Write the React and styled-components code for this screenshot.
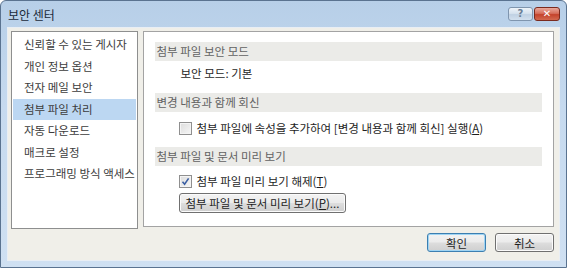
import React from "react";
import styled, { createGlobalStyle } from "styled-components";

const GlobalStyle = createGlobalStyle`
  html, body {
    margin: 0;
    padding: 0;
    background: #ffffff;
  }
  body {
    font-family: "Noto Sans CJK KR", "Noto Sans", sans-serif;
    font-size: 11.5px;
  }
`;

const Window = styled.div`
  width: 567px;
  height: 268px;
  box-sizing: border-box;
  border: 1px solid #5a7390;
  border-radius: 6px 6px 0 0;
  background: linear-gradient(180deg, #b7cfe8 0%, #c6daef 40%, #cfe0f2 100%);
  display: flex;
  flex-direction: column;
  overflow: hidden;
`;

const TitleBar = styled.div`
  height: 26px;
  display: flex;
  align-items: center;
  justify-content: space-between;
  padding: 0 6px 0 7px;
`;

const Title = styled.span`
  color: #1b2a3a;
  font-size: 12px;
  line-height: 14px;
  margin-top: 1px;
`;

const Caption = styled.div`
  display: flex;
  gap: 1px;
  align-self: flex-start;
  margin-top: 6px;
`;

const CaptionButton = styled.div`
  width: ${({ $wide }) => ($wide ? 26 : 25)}px;
  height: 14px;
  box-sizing: border-box;
  border: 1px solid ${({ $close }) => ($close ? "#7a2a1e" : "#7f95ae")};
  border-radius: 3px;
  background: ${({ $close }) =>
    $close
      ? "linear-gradient(180deg, #e9a99c 0%, #d66e5b 45%, #c4432c 55%, #d3694f 100%)"
      : "linear-gradient(180deg, #edf3f9 0%, #d6e2ee 45%, #c0d1e3 55%, #d2e0ee 100%)"};
  display: flex;
  align-items: center;
  justify-content: center;
  color: ${({ $close }) => ($close ? "#ffffff" : "#6a7f96")};
  font-family: "DejaVu Sans", sans-serif;
  font-weight: bold;
  font-size: 10px;
  line-height: 10px;
`;

const Client = styled.div`
  flex: 1;
  margin: 0 6px 6px 6px;
  background: #f0efe9;
  border: 1px solid #e9eef4;
  display: flex;
  flex-direction: column;
  padding: 3px 5px 0 3px;
`;

const Main = styled.div`
  display: flex;
  gap: 5px;
`;

const NavList = styled.ul`
  list-style: none;
  margin: 0;
  width: 127px;
  height: 198px;
  box-sizing: border-box;
  border: 1px solid #8e8f8f;
  background: #ffffff;
  padding: 2px 1px 0 1px;
`;

const NavItem = styled.li`
  height: 21.5px;
  line-height: 21.5px;
  padding-left: 11px;
  color: #3c3c3c;
  white-space: nowrap;
  background: ${({ $active }) => ($active ? "#bcd7f2" : "transparent")};
`;

const Panel = styled.div`
  width: 413px;
  height: 196px;
  box-sizing: border-box;
  border: 1px solid #a3a3a3;
  background: #ffffff;
  padding: 10px 11px 0 11px;
`;

const SectionHeader = styled.div`
  height: 19px;
  line-height: 19px;
  background: #ebebe8;
  color: #626262;
  padding-left: 2px;
`;

const SectionBody = styled.div`
  padding: ${({ $top }) => $top}px 0 ${({ $bottom }) => $bottom}px 24px;
  display: flex;
  flex-direction: column;
  gap: 3px;
  align-items: flex-start;
`;

const Line = styled.div`
  height: 18px;
  line-height: 18px;
  color: #1e1e1e;
  display: flex;
  align-items: center;
  padding-left: ${({ $indent }) => $indent || 0}px;
`;

const Box = styled.span`
  width: 13px;
  height: 13px;
  box-sizing: border-box;
  border: 1px solid #8f8f8f;
  background: linear-gradient(135deg, #dcdcdc 0%, #f6f6f6 100%);
  box-shadow: inset 0 0 0 1px #f4f4f4;
  margin-right: 5px;
  display: flex;
  align-items: center;
  justify-content: center;
`;

const Key = styled.u`
  text-decoration: underline;
`;

const PushButton = styled.button`
  height: ${({ $h }) => $h || 20}px;
  min-width: ${({ $w }) => $w || 0}px;
  box-sizing: border-box;
  padding: 0 6px;
  font-family: inherit;
  font-size: 11.5px;
  color: #1e1e1e;
  border: 1px solid ${({ $default }) => ($default ? "#3c7fb1" : "#707070")};
  border-radius: 3px;
  background: linear-gradient(180deg, #f3f3f3 0%, #ebebeb 48%, #dddddd 52%, #cfcfcf 100%);
  box-shadow: inset 0 0 0 1px ${({ $default }) => ($default ? "#9fd4f3" : "#fbfbfb")};
  display: flex;
  align-items: center;
  justify-content: center;
`;

const Footer = styled.div`
  display: flex;
  justify-content: flex-end;
  gap: 9px;
  margin-top: 4px;
`;

const Check = () => (
  <svg width="9" height="9" viewBox="0 0 9 9">
    <path d="M1.5 4.8 L3.6 7.2 L7.6 1.4" fill="none" stroke="#3b5fa3" strokeWidth="1.6" />
  </svg>
);

const navItems = [
  "신뢰할 수 있는 게시자",
  "개인 정보 옵션",
  "전자 메일 보안",
  "첨부 파일 처리",
  "자동 다운로드",
  "매크로 설정",
  "프로그래밍 방식 액세스",
];

export default function App() {
  return (
    <>
      <GlobalStyle />
      <Window>
        <TitleBar>
          <Title>보안 센터</Title>
          <Caption>
            <CaptionButton>?</CaptionButton>
            <CaptionButton $close $wide>✕</CaptionButton>
          </Caption>
        </TitleBar>
        <Client>
          <Main>
            <NavList>
              {navItems.map((item, i) => (
                <NavItem key={item} $active={i === 3}>
                  {item}
                </NavItem>
              ))}
            </NavList>
            <Panel>
              <SectionHeader>첨부 파일 보안 모드</SectionHeader>
              <SectionBody $top={3} $bottom={11}>
                <Line $indent={2}>보안 모드: 기본</Line>
              </SectionBody>
              <SectionHeader>변경 내용과 함께 회신</SectionHeader>
              <SectionBody $top={7} $bottom={10}>
                <Line>
                  <Box />
                  첨부 파일에 속성을 추가하여 [변경 내용과 함께 회신] 실행(<Key>A</Key>)
                </Line>
              </SectionBody>
              <SectionHeader>첨부 파일 및 문서 미리 보기</SectionHeader>
              <SectionBody $top={6} $bottom={0}>
                <Line>
                  <Box>
                    <Check />
                  </Box>
                  첨부 파일 미리 보기 해제(<Key>T</Key>)
                </Line>
                <PushButton $w={158}>
                  첨부 파일 및 문서 미리 보기(<Key>P</Key>)...
                </PushButton>
              </SectionBody>
            </Panel>
          </Main>
          <Footer>
            <PushButton $default $w={59} $h={19}>
              확인
            </PushButton>
            <PushButton $w={59} $h={19}>
              취소
            </PushButton>
          </Footer>
        </Client>
      </Window>
    </>
  );
}
